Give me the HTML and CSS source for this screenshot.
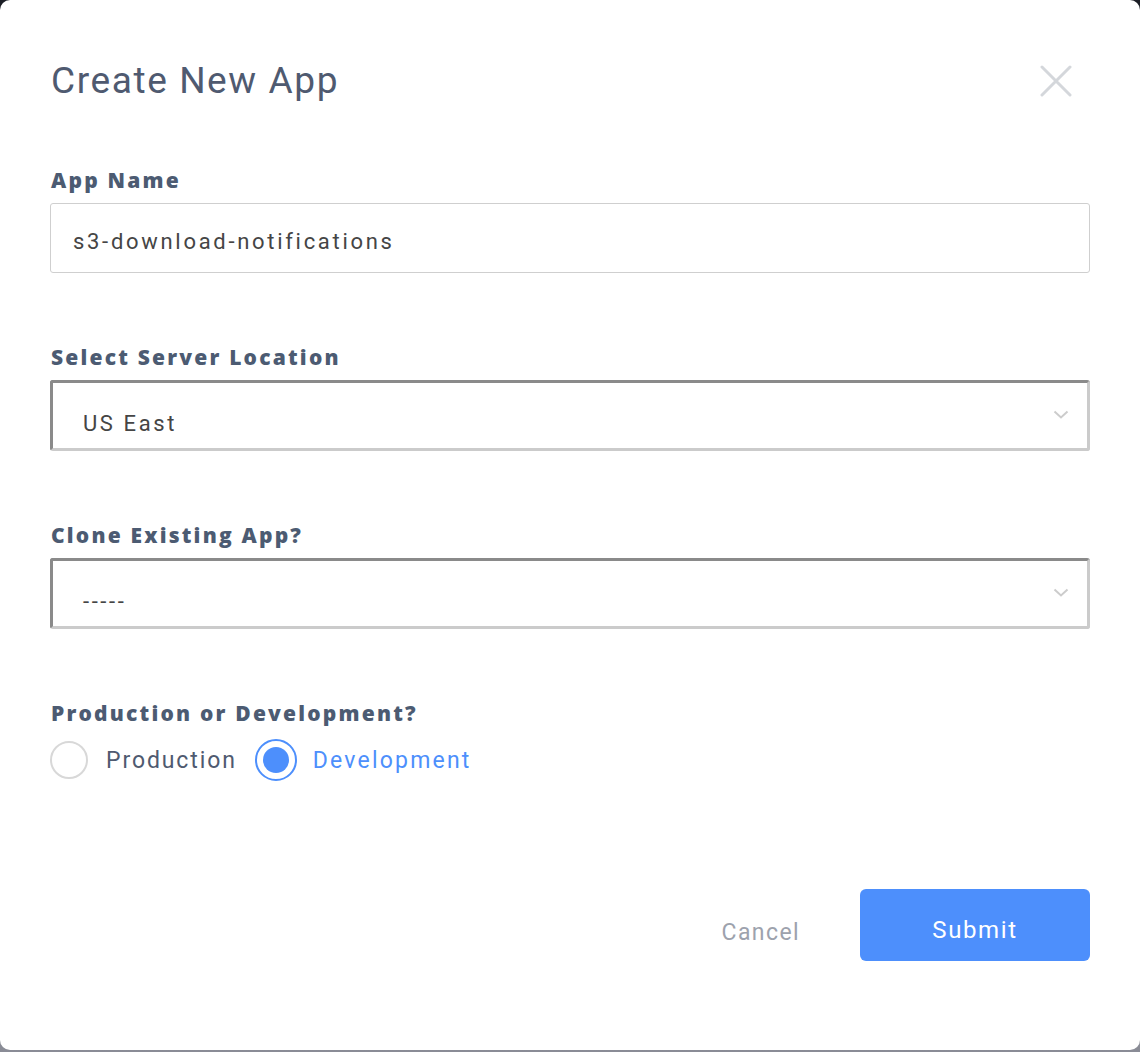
FILE: index.html
```html
<!DOCTYPE html>
<html>
<head>
<meta charset="utf-8">
<link rel="stylesheet" href="styles.css">
</head>
<body>
<div class="modal">
  <div class="header">
    <h1 class="title">Create New App</h1>
    <button class="close" aria-label="Close">
      <svg width="32" height="32" viewBox="0 0 32 32"><path d="M2 2 L30 30 M30 2 L2 30" stroke="#d4d7db" stroke-width="3" stroke-linecap="round"/></svg>
    </button>
  </div>
  <form class="form">
    <div class="field">
      <label class="label">App Name</label>
      <div class="input">s3-download-notifications</div>
    </div>
    <div class="field">
      <label class="label">Select Server Location</label>
      <div class="select"><span class="select-text">US East</span>
        <svg class="chev" width="16" height="10" viewBox="0 0 16 10"><path d="M1.5 1.5 L8 7.5 L14.5 1.5" fill="none" stroke="#cccccc" stroke-width="2"/></svg>
      </div>
    </div>
    <div class="field">
      <label class="label">Clone Existing App?</label>
      <div class="select"><span class="select-text">-----</span>
        <svg class="chev" width="16" height="10" viewBox="0 0 16 10"><path d="M1.5 1.5 L8 7.5 L14.5 1.5" fill="none" stroke="#cccccc" stroke-width="2"/></svg>
      </div>
    </div>
    <div class="field">
      <label class="label">Production or Development?</label>
      <div class="radios">
        <span class="radio"></span><span class="radio-text">Production</span>
        <span class="radio checked"><span class="dot"></span></span><span class="radio-text active">Development</span>
      </div>
    </div>
  </form>
  <div class="footer">
    <span class="cancel">Cancel</span>
    <span class="submit">Submit</span>
  </div>
</div>
</body>
</html>
```
FILE: styles.css
```css
* { box-sizing: border-box; }
html, body { margin: 0; padding: 0; }
body {
  width: 1140px;
  height: 1052px;
  background: linear-gradient(#1b1e25, #8a8c96);
  font-family: Roboto, "Liberation Sans", sans-serif;
}
.modal {
  width: 1140px;
  height: 1050px;
  background: #fff;
  border-radius: 10px;
  padding: 0 50px 0 50px;
  display: flex;
  flex-direction: column;
}
.header {
  margin-top: 58px;
  height: 46px;
  display: flex;
  align-items: center;
  justify-content: space-between;
}
.title {
  margin: 0 0 0 1px;
  font-size: 37px;
  font-weight: 400;
  letter-spacing: 1.6px;
  color: #4f5a70;
  line-height: 46px;
}
.close {
  border: none;
  background: none;
  padding: 0;
  margin-right: 18px;
  width: 32px;
  height: 32px;
}
.form {
  margin-top: 64px;
  display: flex;
  flex-direction: column;
  gap: 72px;
}
.field { display: flex; flex-direction: column; }
.label {
  display: block;
  margin-left: 1px;
  font-family: "Open Sans", Roboto, sans-serif;
  font-size: 21px;
  font-weight: 800;
  letter-spacing: 2.2px;
  line-height: 24px;
  color: #4c5b72;
  margin-bottom: 11px;
}
.input {
  height: 70px;
  border: 1px solid #cfcfcf;
  border-radius: 3px;
  padding: 7px 0 0 22px;
  display: flex;
  align-items: center;
  font-size: 22px;
  letter-spacing: 2.7px;
  color: #454545;
}
.select {
  height: 71px;
  border-style: solid;
  border-width: 3px;
  border-color: #8a8a8a #cbcbcb #cbcbcb #8a8a8a;
  border-radius: 3px;
  padding: 16px 18px 0 30px;
  display: flex;
  align-items: center;
  justify-content: space-between;
  font-size: 22px;
  letter-spacing: 2.6px;
  color: #454545;
}
.chev { margin-top: -18px; }
.radios {
  margin-top: 4px;
  height: 40px;
  display: flex;
  align-items: center;
}
.radio {
  width: 38px;
  height: 38px;
  border-radius: 50%;
  border: 2px solid #d8d8d8;
  display: flex;
  align-items: center;
  justify-content: center;
}
.radio.checked {
  width: 42px;
  height: 42px;
  border-color: #4d8ffc;
}
.dot {
  width: 26px;
  height: 26px;
  border-radius: 50%;
  background: #4d8ffc;
}
.radio-text {
  font-size: 23px;
  letter-spacing: 1.9px;
  color: #4f5a70;
  margin-left: 18px;
  margin-right: 18px;
}
.radio-text.active { color: #4d8ffc; margin-left: 16px; letter-spacing: 2.2px; }
.footer {
  margin-top: 109px;
  display: flex;
  justify-content: flex-end;
  align-items: center;
}
.cancel {
  font-size: 23px;
  letter-spacing: 1.4px;
  color: #9da2ad;
  margin-right: 60px;
  margin-top: 14px;
}
.submit {
  width: 230px;
  height: 72px;
  border-radius: 6px;
  background: #4d8ffc;
  color: #fff;
  font-size: 24px;
  letter-spacing: 1.6px;
  display: flex;
  align-items: center;
  justify-content: center;
  padding-top: 10px;
}
```
